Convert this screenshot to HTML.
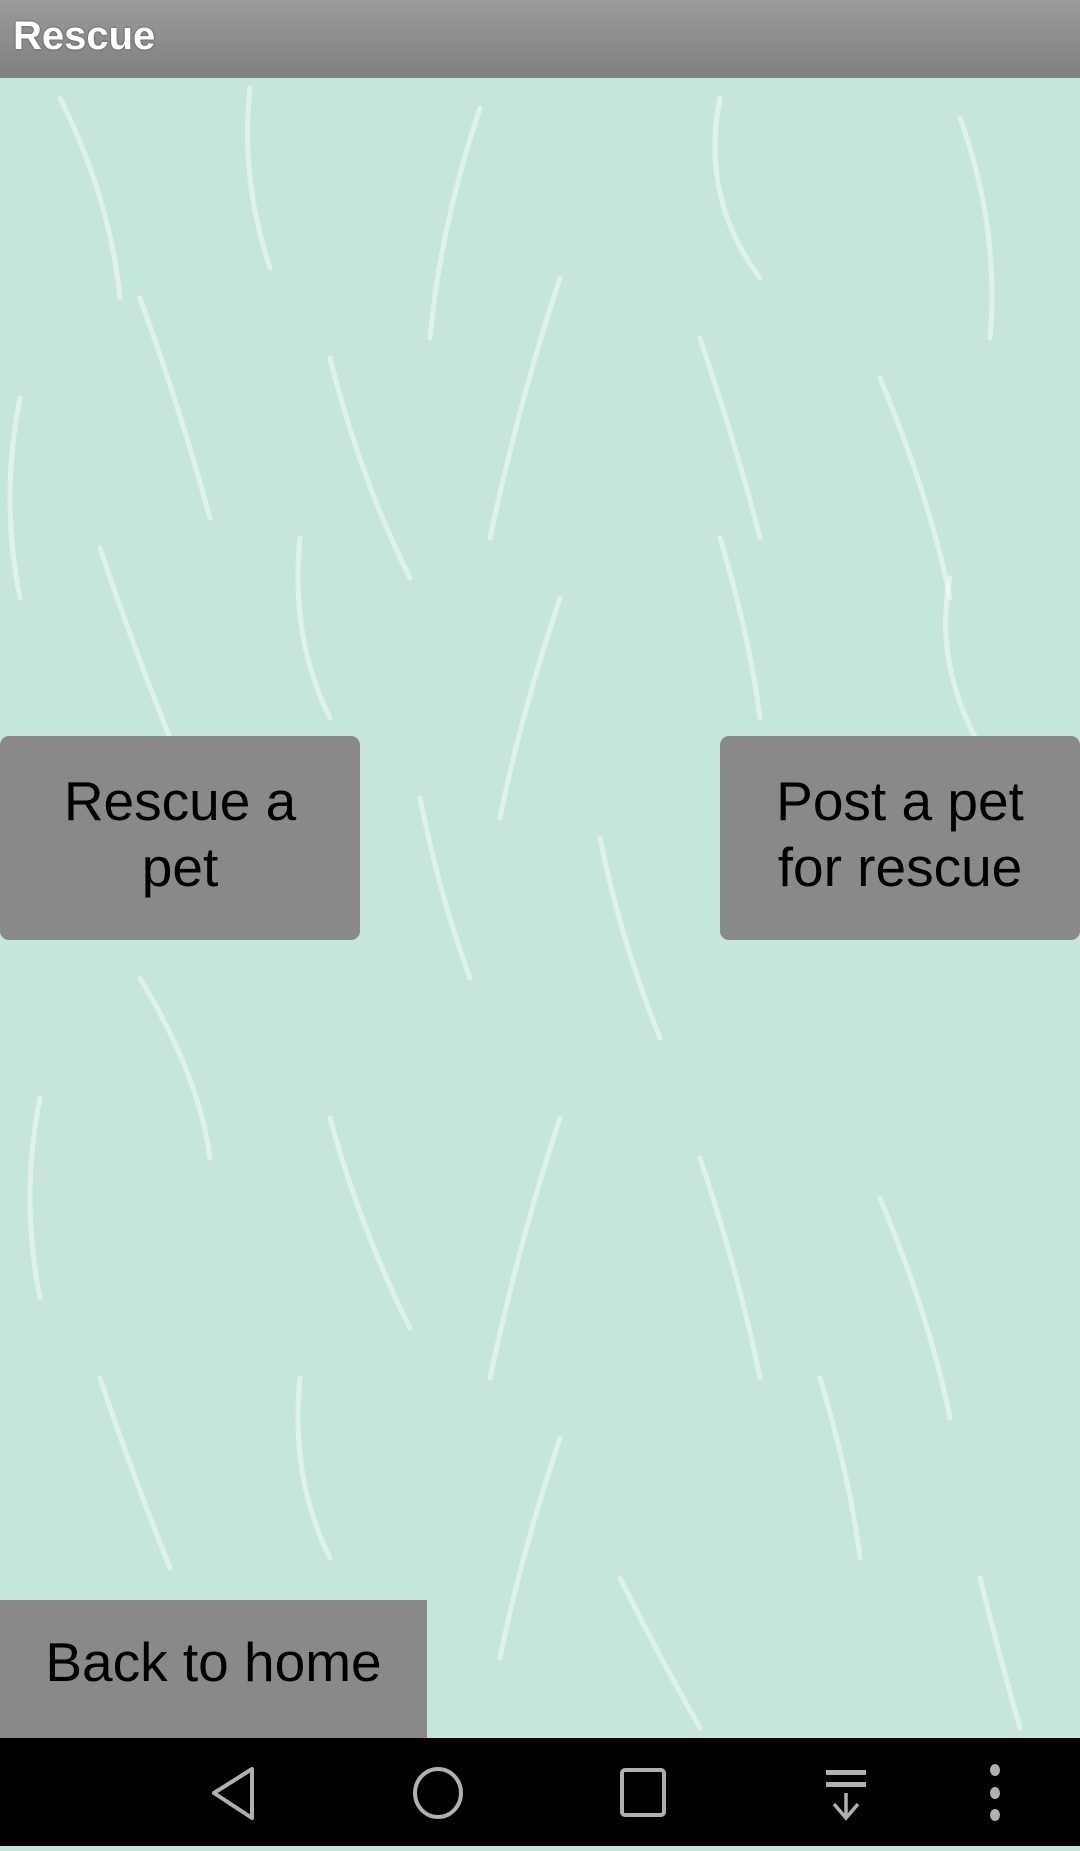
<!DOCTYPE html>
<html><head><meta charset="utf-8"><style>
*{margin:0;padding:0;box-sizing:border-box}
body{width:1080px;height:1846px;position:relative;overflow:hidden;background:#c7e6db;font-family:"Liberation Sans",Arial,sans-serif}
.bar{position:absolute;left:0;top:0;width:1080px;height:78px;background:linear-gradient(#9b9b9b,#7f7f7f)}
.bar span{position:absolute;left:13px;top:14px;font-size:40px;font-weight:bold;color:#fff;text-shadow:0 0 2px rgba(0,0,0,.5)}
.btn{position:absolute;background:#898989;color:#000;font-size:55px;text-align:center}
.btn div{position:absolute;left:0;width:100%;line-height:66px}
.nav{position:absolute;left:0;top:1738px;width:1080px;height:108px;background:#000}
</style></head><body>
<svg style="position:absolute;left:0;top:78px" width="1080" height="1660">
<g stroke="#ffffff" stroke-opacity=".45" stroke-width="5" fill="none" stroke-linecap="round">
<path d="M60 20 Q110 120 120 220"/><path d="M250 10 Q240 100 270 190"/><path d="M480 30 Q440 150 430 260"/>
<path d="M720 20 Q700 120 760 200"/><path d="M960 40 Q1000 150 990 260"/><path d="M140 220 Q180 330 210 440"/>
<path d="M330 280 Q360 400 410 500"/><path d="M560 200 Q520 320 490 460"/><path d="M700 260 Q740 380 760 460"/>
<path d="M880 300 Q930 420 950 520"/><path d="M20 320 Q0 420 20 520"/><path d="M100 470 Q130 560 170 660"/>
<path d="M300 460 Q290 560 330 640"/><path d="M560 520 Q520 640 500 740"/><path d="M720 460 Q750 560 760 640"/>
<path d="M950 500 Q930 600 1000 700"/><path d="M420 720 Q440 820 470 900"/><path d="M600 760 Q620 860 660 960"/>
<path d="M140 900 Q200 1000 210 1080"/><path d="M330 1040 Q360 1150 410 1250"/><path d="M560 1040 Q520 1160 490 1300"/>
<path d="M700 1080 Q740 1200 760 1300"/><path d="M880 1120 Q930 1240 950 1340"/><path d="M100 1300 Q130 1390 170 1490"/>
<path d="M300 1300 Q290 1400 330 1480"/><path d="M560 1360 Q520 1480 500 1580"/><path d="M820 1300 Q850 1400 860 1480"/>
<path d="M980 1500 Q1000 1580 1020 1650"/><path d="M620 1500 Q660 1580 700 1650"/><path d="M40 1020 Q20 1120 40 1220"/>
</g></svg>
<div class="bar"><span>Rescue</span></div>
<div class="btn" style="left:0;top:736px;width:360px;height:204px;border-radius:9px">
<div style="top:32px">Rescue a</div><div style="top:98px">pet</div></div>
<div class="btn" style="left:720px;top:736px;width:360px;height:204px;border-radius:9px">
<div style="top:32px">Post a pet</div><div style="top:98px">for rescue</div></div>
<div class="btn" style="left:0;top:1600px;width:427px;height:138px">
<div style="top:29px">Back to home</div></div>
<div class="nav">
<svg width="1080" height="108">
<g stroke="#b0b0b0" stroke-width="4" fill="none" stroke-linejoin="round">
<path d="M252 31 L252 80 L214 55 Z"/>
<ellipse cx="438" cy="55" rx="23" ry="24"/>
<rect x="622" y="32" width="42" height="45" rx="3"/>
</g>
<g fill="#b0b0b0"><rect x="826" y="32" width="40" height="5"/><rect x="826" y="44" width="40" height="5"/></g>
<path d="M846 55 L846 80 M834 66 L846 80 L858 66" stroke="#b0b0b0" stroke-width="3.5" fill="none"/>
<g fill="#b0b0b0"><ellipse cx="995" cy="32" rx="5" ry="6"/><ellipse cx="995" cy="55" rx="5" ry="6"/><ellipse cx="995" cy="77" rx="5" ry="6"/></g>
</svg></div>
</body></html>
